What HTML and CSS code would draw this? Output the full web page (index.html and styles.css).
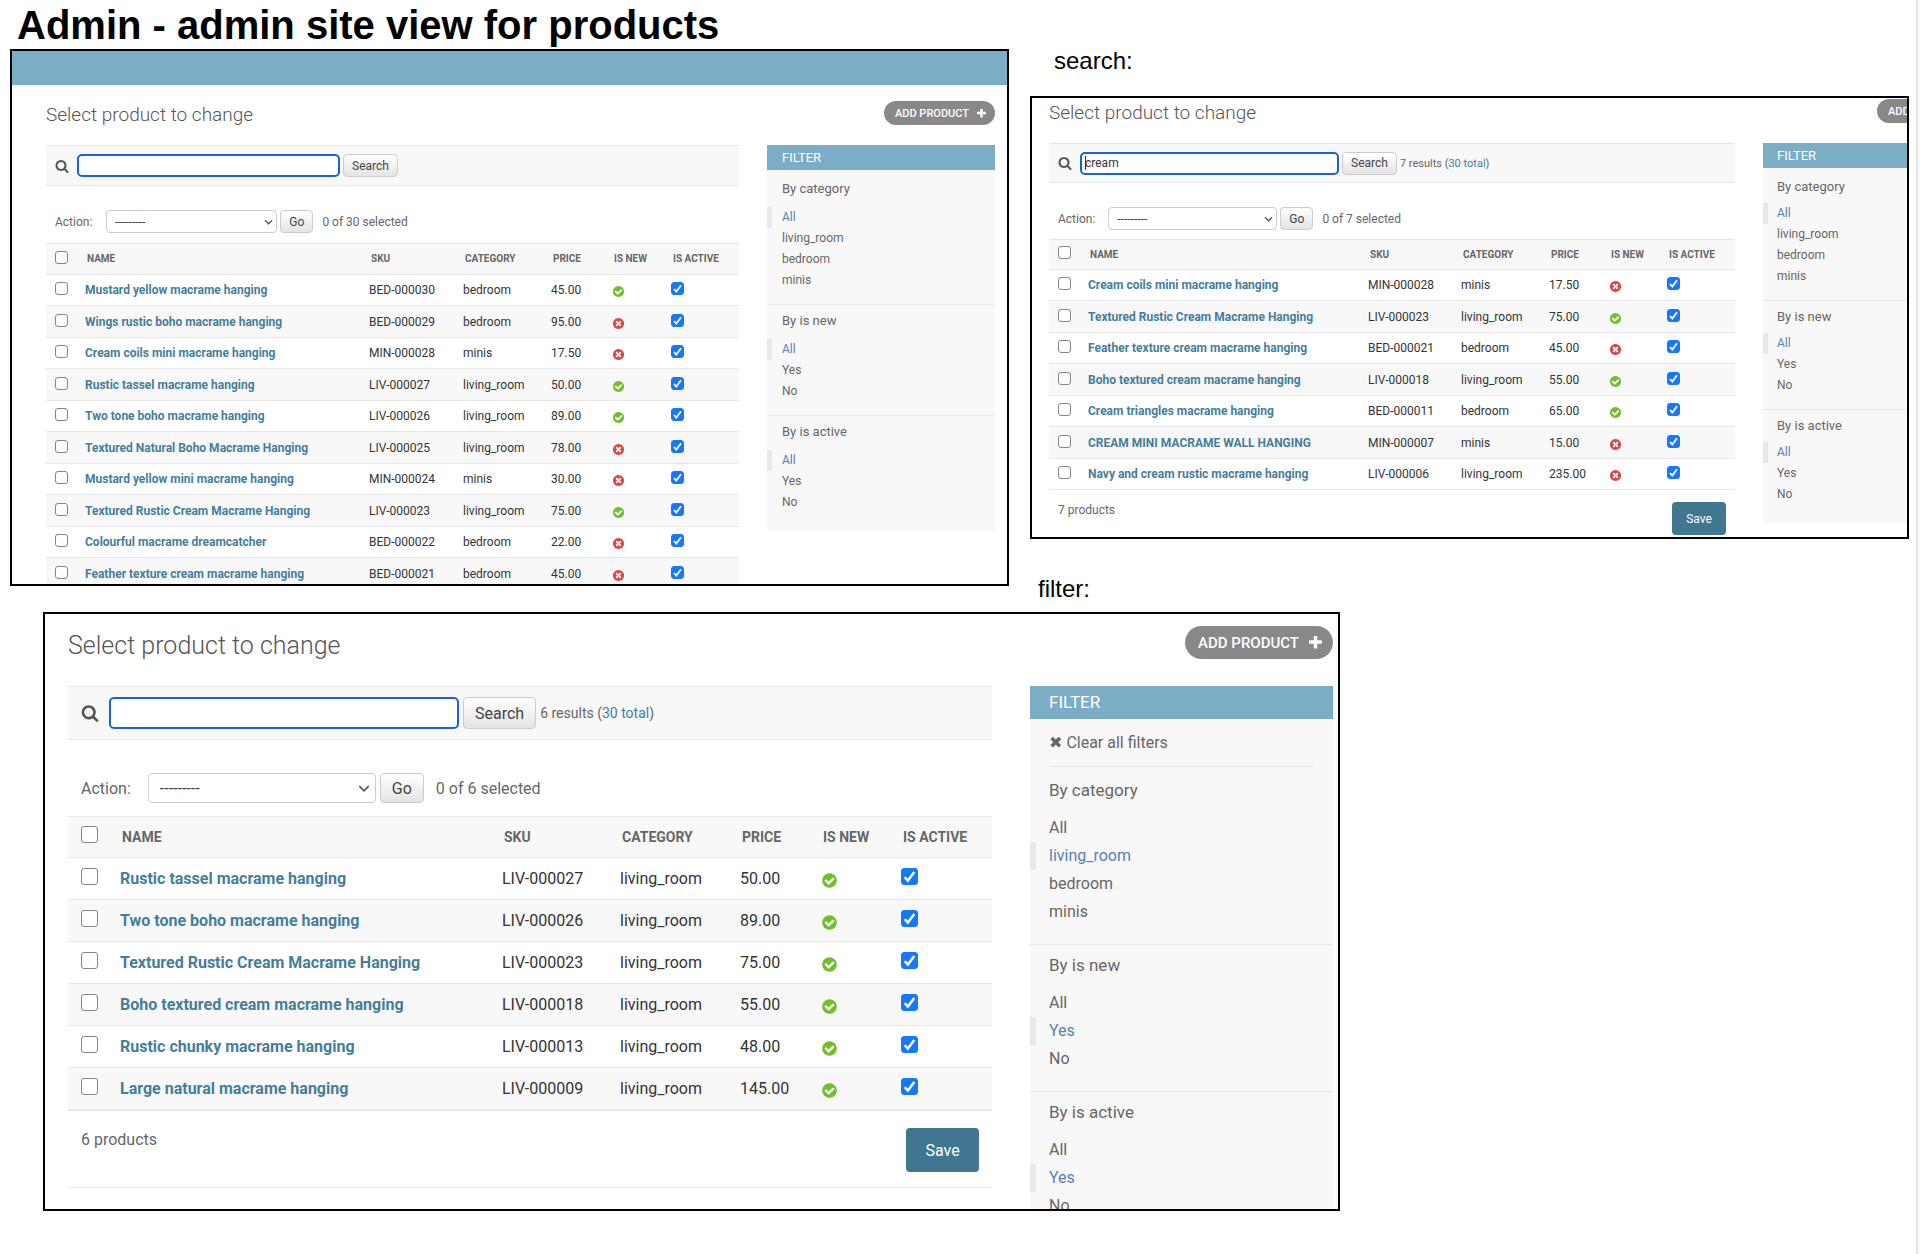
FILE: index.html
```html
<!DOCTYPE html>
<html lang="en">
<head>
<meta charset="utf-8">
<meta name="viewport" content="width=device-width, initial-scale=1">
<title>Admin - admin site view for products</title>
<link rel="stylesheet" href="styles.css">
</head>
<body>
<svg class="sprite" aria-hidden="true">
  <symbol id="yes" viewBox="0 0 1792 1792"><path fill="#70bf2b" d="M1412 734q0-28-18-46l-91-90q-19-19-45-19t-45 19l-408 407-226-226q-19-19-45-19t-45 19l-91 90q-18 18-18 46 0 27 18 45l362 362q19 19 45 19 27 0 46-19l543-543q18-18 18-45zm252 162q0 209-103 385.5t-279.5 279.5-385.5 103-385.5-103-279.5-279.5-103-385.5 103-385.5 279.5-279.5 385.5-103 385.5 103 279.5 279.5 103 385.5z"/></symbol>
  <symbol id="no" viewBox="0 0 1792 1792"><path fill="#dd4646" d="M1277 1122q0-26-19-45l-181-181 181-181q19-19 19-45 0-27-19-46l-90-90q-19-18-46-18-26 0-45 18l-181 181-181-181q-19-18-45-18-27 0-46 18l-90 90q-19 19-19 46 0 26 19 45l181 181-181 181q-19 19-19 45 0 27 19 46l90 90q19 18 46 18 26 0 45-18l181-181 181 181q19 18 45 18 27 0 46-18l90-90q19-19 19-46zm387-226q0 209-103 385.5t-279.5 279.5-385.5 103-385.5-103-279.5-279.5-103-385.5 103-385.5 279.5-279.5 385.5-103 385.5 103 279.5 279.5 103 385.5z"/></symbol>
  <symbol id="lens" viewBox="0 0 1792 1792"><path fill="#555" d="M1216 832q0-185-131.5-316.5t-316.5-131.5-316.5 131.5-131.5 316.5 131.5 316.5 316.5 131.5 316.5-131.5 131.5-316.5zm512 832q0 52-38 90t-90 38q-54 0-90-38l-343-342q-179 124-399 124-143 0-273.5-55.5t-225-150-150-225-55.5-273.5 55.5-273.5 150-225 225-150 273.5-55.5 273.5 55.5 225 150 150 225 55.5 273.5q0 220-124 399l343 343q37 37 37 90z"/></symbol>
  <symbol id="plus" viewBox="192 192 1408 1408"><path fill="#fff" d="M1600 736v192q0 40-28 68t-68 28h-416v416q0 40-28 68t-68 28h-192q-40 0-68-28t-28-68v-416h-416q-40 0-68-28t-28-68v-192q0-40 28-68t68-28h416v-416q0-40 28-68t68-28h192q40 0 68 28t28 68v416h416q40 0 68 28t28 68z"/></symbol>
</svg>

<main class="page">
  <h1 class="page-title">Admin - admin site view for products</h1>

  <div class="top">
    <section class="shot shot-all" aria-label="All products">
      <div class="band"></div>
      <div class="admin">
        <header class="head">
          <h2 class="title">Select product to change</h2>
          <a class="add" href="#">ADD PRODUCT <svg><use href="#plus"/></svg></a>
        </header>
        <div class="cols">
          <div class="listing">
            <form class="search">
              <label for="q1"><svg class="lens" role="img" aria-label="Search"><use href="#lens"/></svg></label>
              <input class="query" id="q1" type="text">
              <button class="btn" type="button">Search</button>
            </form>
            <div class="actions">
              <label for="a1">Action:</label>
              <select class="select" id="a1"><option>---------</option></select>
              <button class="btn" type="button">Go</button>
              <span class="counter">0 of 30 selected</span>
            </div>
            <table class="results">
              <colgroup><col class="c-check"><col class="c-name"><col class="c-sku"><col class="c-cat"><col class="c-price"><col class="c-new"><col class="c-active"></colgroup>
              <thead><tr><th><input type="checkbox" aria-label="Select all"></th><th>NAME</th><th>SKU</th><th>CATEGORY</th><th>PRICE</th><th>IS NEW</th><th>IS ACTIVE</th></tr></thead>
              <tbody>
                <tr><td><input type="checkbox" aria-label="Select"></td><th><a href="#">Mustard yellow macrame hanging</a></th><td>BED-000030</td><td>bedroom</td><td>45.00</td><td><svg class="flag"><use href="#yes"/></svg></td><td><input type="checkbox" checked aria-label="Is active"></td></tr>
                <tr><td><input type="checkbox" aria-label="Select"></td><th><a href="#">Wings rustic boho macrame hanging</a></th><td>BED-000029</td><td>bedroom</td><td>95.00</td><td><svg class="flag"><use href="#no"/></svg></td><td><input type="checkbox" checked aria-label="Is active"></td></tr>
                <tr><td><input type="checkbox" aria-label="Select"></td><th><a href="#">Cream coils mini macrame hanging</a></th><td>MIN-000028</td><td>minis</td><td>17.50</td><td><svg class="flag"><use href="#no"/></svg></td><td><input type="checkbox" checked aria-label="Is active"></td></tr>
                <tr><td><input type="checkbox" aria-label="Select"></td><th><a href="#">Rustic tassel macrame hanging</a></th><td>LIV-000027</td><td>living_room</td><td>50.00</td><td><svg class="flag"><use href="#yes"/></svg></td><td><input type="checkbox" checked aria-label="Is active"></td></tr>
                <tr><td><input type="checkbox" aria-label="Select"></td><th><a href="#">Two tone boho macrame hanging</a></th><td>LIV-000026</td><td>living_room</td><td>89.00</td><td><svg class="flag"><use href="#yes"/></svg></td><td><input type="checkbox" checked aria-label="Is active"></td></tr>
                <tr><td><input type="checkbox" aria-label="Select"></td><th><a href="#">Textured Natural Boho Macrame Hanging</a></th><td>LIV-000025</td><td>living_room</td><td>78.00</td><td><svg class="flag"><use href="#no"/></svg></td><td><input type="checkbox" checked aria-label="Is active"></td></tr>
                <tr><td><input type="checkbox" aria-label="Select"></td><th><a href="#">Mustard yellow mini macrame hanging</a></th><td>MIN-000024</td><td>minis</td><td>30.00</td><td><svg class="flag"><use href="#no"/></svg></td><td><input type="checkbox" checked aria-label="Is active"></td></tr>
                <tr><td><input type="checkbox" aria-label="Select"></td><th><a href="#">Textured Rustic Cream Macrame Hanging</a></th><td>LIV-000023</td><td>living_room</td><td>75.00</td><td><svg class="flag"><use href="#yes"/></svg></td><td><input type="checkbox" checked aria-label="Is active"></td></tr>
                <tr><td><input type="checkbox" aria-label="Select"></td><th><a href="#">Colourful macrame dreamcatcher</a></th><td>BED-000022</td><td>bedroom</td><td>22.00</td><td><svg class="flag"><use href="#no"/></svg></td><td><input type="checkbox" checked aria-label="Is active"></td></tr>
                <tr><td><input type="checkbox" aria-label="Select"></td><th><a href="#">Feather texture cream macrame hanging</a></th><td>BED-000021</td><td>bedroom</td><td>45.00</td><td><svg class="flag"><use href="#no"/></svg></td><td><input type="checkbox" checked aria-label="Is active"></td></tr>
              </tbody>
            </table>
          </div>
          <aside class="filter">
            <h3>FILTER</h3>
            <section class="group"><h4>By category</h4>
              <ul><li class="on"><a href="#">All</a></li><li><a href="#">living_room</a></li><li><a href="#">bedroom</a></li><li><a href="#">minis</a></li></ul></section>
            <section class="group"><h4>By is new</h4>
              <ul><li class="on"><a href="#">All</a></li><li><a href="#">Yes</a></li><li><a href="#">No</a></li></ul></section>
            <section class="group"><h4>By is active</h4>
              <ul><li class="on"><a href="#">All</a></li><li><a href="#">Yes</a></li><li><a href="#">No</a></li></ul></section>
          </aside>
        </div>
      </div>
    </section>

    <div class="right">
      <p class="caption caption-search">search:</p>
      <section class="shot shot-search" aria-label="Search results">
        <div class="admin">
          <header class="head">
            <h2 class="title">Select product to change</h2>
            <a class="add" href="#">ADD PRODUCT <svg><use href="#plus"/></svg></a>
          </header>
          <div class="cols">
            <div class="listing">
              <form class="search">
                <label for="q2"><svg class="lens" role="img" aria-label="Search"><use href="#lens"/></svg></label>
                <input class="query query-caret" id="q2" type="text" value="cream">
                <button class="btn" type="button">Search</button>
                <span class="found">7 results (<a href="#">30 total</a>)</span>
              </form>
              <div class="actions">
                <label for="a2">Action:</label>
                <select class="select" id="a2"><option>---------</option></select>
                <button class="btn" type="button">Go</button>
                <span class="counter">0 of 7 selected</span>
              </div>
              <table class="results">
                <colgroup><col class="c-check"><col class="c-name"><col class="c-sku"><col class="c-cat"><col class="c-price"><col class="c-new"><col class="c-active"></colgroup>
                <thead><tr><th><input type="checkbox" aria-label="Select all"></th><th>NAME</th><th>SKU</th><th>CATEGORY</th><th>PRICE</th><th>IS NEW</th><th>IS ACTIVE</th></tr></thead>
                <tbody>
                  <tr><td><input type="checkbox" aria-label="Select"></td><th><a href="#">Cream coils mini macrame hanging</a></th><td>MIN-000028</td><td>minis</td><td>17.50</td><td><svg class="flag"><use href="#no"/></svg></td><td><input type="checkbox" checked aria-label="Is active"></td></tr>
                  <tr><td><input type="checkbox" aria-label="Select"></td><th><a href="#">Textured Rustic Cream Macrame Hanging</a></th><td>LIV-000023</td><td>living_room</td><td>75.00</td><td><svg class="flag"><use href="#yes"/></svg></td><td><input type="checkbox" checked aria-label="Is active"></td></tr>
                  <tr><td><input type="checkbox" aria-label="Select"></td><th><a href="#">Feather texture cream macrame hanging</a></th><td>BED-000021</td><td>bedroom</td><td>45.00</td><td><svg class="flag"><use href="#no"/></svg></td><td><input type="checkbox" checked aria-label="Is active"></td></tr>
                  <tr><td><input type="checkbox" aria-label="Select"></td><th><a href="#">Boho textured cream macrame hanging</a></th><td>LIV-000018</td><td>living_room</td><td>55.00</td><td><svg class="flag"><use href="#yes"/></svg></td><td><input type="checkbox" checked aria-label="Is active"></td></tr>
                  <tr><td><input type="checkbox" aria-label="Select"></td><th><a href="#">Cream triangles macrame hanging</a></th><td>BED-000011</td><td>bedroom</td><td>65.00</td><td><svg class="flag"><use href="#yes"/></svg></td><td><input type="checkbox" checked aria-label="Is active"></td></tr>
                  <tr><td><input type="checkbox" aria-label="Select"></td><th><a href="#">CREAM MINI MACRAME WALL HANGING</a></th><td>MIN-000007</td><td>minis</td><td>15.00</td><td><svg class="flag"><use href="#no"/></svg></td><td><input type="checkbox" checked aria-label="Is active"></td></tr>
                  <tr><td><input type="checkbox" aria-label="Select"></td><th><a href="#">Navy and cream rustic macrame hanging</a></th><td>LIV-000006</td><td>living_room</td><td>235.00</td><td><svg class="flag"><use href="#no"/></svg></td><td><input type="checkbox" checked aria-label="Is active"></td></tr>
                </tbody>
              </table>
              <footer class="foot"><span class="total">7 products</span><button class="save" type="button">Save</button></footer>
            </div>
            <aside class="filter">
              <h3>FILTER</h3>
              <section class="group"><h4>By category</h4>
                <ul><li class="on"><a href="#">All</a></li><li><a href="#">living_room</a></li><li><a href="#">bedroom</a></li><li><a href="#">minis</a></li></ul></section>
              <section class="group"><h4>By is new</h4>
                <ul><li class="on"><a href="#">All</a></li><li><a href="#">Yes</a></li><li><a href="#">No</a></li></ul></section>
              <section class="group"><h4>By is active</h4>
                <ul><li class="on"><a href="#">All</a></li><li><a href="#">Yes</a></li><li><a href="#">No</a></li></ul></section>
            </aside>
          </div>
        </div>
      </section>
      <p class="caption caption-filter">filter:</p>
    </div>
  </div>

  <div class="bottom">
    <section class="shot shot-filter" aria-label="Filtered products">
      <div class="admin">
        <header class="head">
          <h2 class="title">Select product to change</h2>
          <a class="add" href="#">ADD PRODUCT <svg><use href="#plus"/></svg></a>
        </header>
        <div class="cols">
          <div class="listing">
            <form class="search">
              <label for="q3"><svg class="lens" role="img" aria-label="Search"><use href="#lens"/></svg></label>
              <input class="query" id="q3" type="text">
              <button class="btn" type="button">Search</button>
              <span class="found">6 results (<a href="#">30 total</a>)</span>
            </form>
            <div class="actions">
              <label for="a3">Action:</label>
              <select class="select" id="a3"><option>---------</option></select>
              <button class="btn" type="button">Go</button>
              <span class="counter">0 of 6 selected</span>
            </div>
            <table class="results">
              <colgroup><col class="c-check"><col class="c-name"><col class="c-sku"><col class="c-cat"><col class="c-price"><col class="c-new"><col class="c-active"></colgroup>
              <thead><tr><th><input type="checkbox" aria-label="Select all"></th><th>NAME</th><th>SKU</th><th>CATEGORY</th><th>PRICE</th><th>IS NEW</th><th>IS ACTIVE</th></tr></thead>
              <tbody>
                <tr><td><input type="checkbox" aria-label="Select"></td><th><a href="#">Rustic tassel macrame hanging</a></th><td>LIV-000027</td><td>living_room</td><td>50.00</td><td><svg class="flag"><use href="#yes"/></svg></td><td><input type="checkbox" checked aria-label="Is active"></td></tr>
                <tr><td><input type="checkbox" aria-label="Select"></td><th><a href="#">Two tone boho macrame hanging</a></th><td>LIV-000026</td><td>living_room</td><td>89.00</td><td><svg class="flag"><use href="#yes"/></svg></td><td><input type="checkbox" checked aria-label="Is active"></td></tr>
                <tr><td><input type="checkbox" aria-label="Select"></td><th><a href="#">Textured Rustic Cream Macrame Hanging</a></th><td>LIV-000023</td><td>living_room</td><td>75.00</td><td><svg class="flag"><use href="#yes"/></svg></td><td><input type="checkbox" checked aria-label="Is active"></td></tr>
                <tr><td><input type="checkbox" aria-label="Select"></td><th><a href="#">Boho textured cream macrame hanging</a></th><td>LIV-000018</td><td>living_room</td><td>55.00</td><td><svg class="flag"><use href="#yes"/></svg></td><td><input type="checkbox" checked aria-label="Is active"></td></tr>
                <tr><td><input type="checkbox" aria-label="Select"></td><th><a href="#">Rustic chunky macrame hanging</a></th><td>LIV-000013</td><td>living_room</td><td>48.00</td><td><svg class="flag"><use href="#yes"/></svg></td><td><input type="checkbox" checked aria-label="Is active"></td></tr>
                <tr><td><input type="checkbox" aria-label="Select"></td><th><a href="#">Large natural macrame hanging</a></th><td>LIV-000009</td><td>living_room</td><td>145.00</td><td><svg class="flag"><use href="#yes"/></svg></td><td><input type="checkbox" checked aria-label="Is active"></td></tr>
              </tbody>
            </table>
            <footer class="foot"><span class="total">6 products</span><button class="save" type="button">Save</button></footer>
          </div>
          <aside class="filter">
            <h3>FILTER</h3>
            <p class="clear"><a href="#"><span class="cross">&#10006;</span> Clear all filters</a></p>
            <section class="group"><h4>By category</h4>
              <ul><li><a href="#">All</a></li><li class="on"><a href="#">living_room</a></li><li><a href="#">bedroom</a></li><li><a href="#">minis</a></li></ul></section>
            <section class="group"><h4>By is new</h4>
              <ul><li><a href="#">All</a></li><li class="on"><a href="#">Yes</a></li><li><a href="#">No</a></li></ul></section>
            <section class="group"><h4>By is active</h4>
              <ul><li><a href="#">All</a></li><li class="on"><a href="#">Yes</a></li><li><a href="#">No</a></li></ul></section>
          </aside>
        </div>
      </div>
    </section>
  </div>
</main>
</body>
</html>
```
FILE: styles.css
```css
* { box-sizing: border-box; }

body {
  margin: 0;
  padding-right: 2px;
  background: #f8f8f8;
  font-family: Roboto, "Liberation Sans", sans-serif;
}

h1, h2, h3, h4, p, ul { margin: 0; padding: 0; }
ul { list-style: none; }
a { color: inherit; text-decoration: none; }
button, input, select { font: inherit; margin: 0; }
svg { display: block; }
.sprite { position: absolute; width: 0; height: 0; }

/* Page */
.page {
  min-height: 100vh;
  padding: 0 7px 43px 10px;
  border-right: 2px solid #e4e4e4;
  background: #fff;
}
.page-title {
  padding: 1px 0 0 7px;
  font: bold 40px/48px "Liberation Sans", Arial, sans-serif;
  color: #000;
}
.top {
  display: grid;
  grid-template-columns: 999fr 879fr;
  gap: 21px;
  align-items: start;
}
.bottom {
  display: grid;
  grid-template-columns: 1297fr 569fr;
  padding: 11px 0 0 33px;
}
.right { min-width: 0; }
.caption {
  font: 24px/24px "Liberation Sans", Arial, sans-serif;
  color: #000;
}
.caption-search { padding: 0 0 23px 24px; }
.caption-filter { padding: 38px 0 0 8px; }

/* Framed view: the frame crops what runs past it */
.shot {
  --text: 12px;
  --small: 11px;
  --label: 10px;
  --heading: 13px;
  --title: 19px;
  --title-line: 28px;
  --add: 11px;
  --add-h: 24px;
  --add-pad: 11px;
  --plus: 9px;
  --bar: 41px;
  --edge: 9px;
  --lens: 14px;
  --lens-gap: 8px;
  --query: 263px;
  --query-h: 23px;
  --gap: 3px;
  --control: 23px;
  --select: 171px;
  --select-gap: 14px;
  --act-top: 24px;
  --act-bottom: 10px;
  --cell: 8px;
  --head-cell: 10px;
  --box: 13px;
  --box-lift: 3px;
  --flag: 13px;
  --flag-drop: 3px;
  --head-row: 32px;
  --odd: 31px;
  --even: 32px;
  --side: 228px;
  --side-gap: 28px;
  --side-pad: 15px;
  --side-head: 25px;
  --group-head: 32px;
  --group-gap: 2px;
  --item: 21px;
  --group-end: 14px;
  --marker: 5px;
  min-width: 0;
  overflow: hidden;
  border: 2px solid #000;
  background: #fff;
  color: #666;
  font-size: var(--text);
}
.shot-all { height: 537px; }
.shot-search {
  --bar: 40px;
  --query: 259px;
  --select: 169px;
  --select-gap: 13px;
  --act-bottom: 9px;
  --head-row: 31px;
  --side: 225px;
  --side-pad: 14px;
  --group-head: 31px;
  --group-gap: 1px;
  height: 443px;
}
.shot-filter {
  --text: 16px;
  --small: 14px;
  --label: 14px;
  --heading: 17px;
  --title: 25px;
  --title-line: 40px;
  --add: 15px;
  --add-h: 33px;
  --add-pad: 13px;
  --plus: 13px;
  --bar: 54px;
  --edge: 13px;
  --lens: 18px;
  --lens-gap: 10px;
  --query: 350px;
  --query-h: 32px;
  --gap: 4px;
  --control: 30px;
  --select: 228px;
  --select-gap: 17px;
  --act-top: 33px;
  --act-bottom: 13px;
  --cell: 11px;
  --head-cell: 13px;
  --box: 17px;
  --box-lift: 4px;
  --flag: 17px;
  --head-row: 42px;
  --odd: 42px;
  --even: 42px;
  --side: 303px;
  --side-gap: 38px;
  --side-pad: 19px;
  --side-head: 33px;
  --group-head: 40px;
  --group-gap: 4px;
  --item: 28px;
  --group-end: 19px;
  --marker: 6px;
  height: 599px;
}

.band { height: 34px; background: #7badc7; }

.shot-all .admin { padding: 0 12px 0 34px; }
.shot-search .admin { margin-right: -81px; padding-left: 17px; }
.shot-filter .admin { padding: 0 5px 0 23px; }

/* Title row */
.head {
  display: flex;
  justify-content: space-between;
  align-items: flex-start;
  height: 60px;
  padding-top: 16px;
}
.shot-search .head { height: 45px; padding-top: 1px; }
.shot-filter .head { height: 72px; padding-top: 12px; }
.title {
  font-size: var(--title);
  line-height: var(--title-line);
  font-weight: 300;
  color: #555;
}
.add {
  display: flex;
  align-items: center;
  gap: 8px;
  height: var(--add-h);
  padding: 0 9px 0 var(--add-pad);
  border-radius: 17px;
  background: #888;
  color: #fff;
  font-size: var(--add);
  font-weight: 500;
}
.add svg { width: var(--plus); height: var(--plus); }
.shot-filter .add { gap: 10px; padding-right: 11px; }

.cols {
  display: grid;
  grid-template-columns: minmax(0, 1fr) var(--side);
  gap: var(--side-gap);
  align-items: start;
}

/* Search bar */
.search {
  display: flex;
  align-items: center;
  gap: var(--gap);
  height: var(--bar);
  padding-left: var(--edge);
  border: solid #e8e8e8;
  border-width: 1px 0;
  background: #f8f8f8;
}
.search label { margin-right: calc(var(--lens-gap) - var(--gap)); }
.lens { width: var(--lens); height: var(--lens); }
.query {
  width: var(--query);
  height: var(--query-h);
  padding: 0 5px;
  border: 2px solid #1763d0;
  border-radius: 5px;
  background: #fff;
  color: #333;
  outline: 0;
}
.query-caret {
  padding: 0 3px;
  background: linear-gradient(#333, #333) 3px center / 1px 14px no-repeat #fff;
}
.btn {
  height: var(--query-h);
  padding: 0 8px;
  border: 1px solid #ccc;
  border-radius: 4px;
  background: linear-gradient(#fff, #e4e4e4);
  color: #444;
}
.shot-filter .btn { padding: 0 11px; }
.found { font-size: var(--small); white-space: nowrap; }
.found a { color: #447e9b; }

/* Action row */
.actions {
  display: flex;
  align-items: center;
  gap: var(--gap);
  padding: var(--act-top) 0 var(--act-bottom) var(--edge);
}
.actions label { margin-right: calc(var(--select-gap) - var(--gap)); }
.actions .btn { height: var(--control); }
.select {
  appearance: none;
  width: var(--select);
  height: var(--control);
  padding: 0 8px;
  border: 1px solid #ccc;
  border-radius: 4px;
  background: url("data:image/svg+xml,%3Csvg xmlns='http://www.w3.org/2000/svg' viewBox='0 0 10 6'%3E%3Cpath d='M1 1l4 4 4-4' fill='none' stroke='%23555' stroke-width='1.4'/%3E%3C/svg%3E") right 3px center / 9px 6px no-repeat #fff;
  color: #444;
}
.shot-filter .select { padding: 0 11px; background-position: right 5px center; background-size: 12px 7px; }
.counter { margin-left: 6px; }
.shot-filter .counter { margin-left: 8px; }

/* Results */
.results {
  width: 100%;
  table-layout: fixed;
  border-collapse: separate;
  border-spacing: 0;
}
.c-check { width: 31px; }
.c-name { width: 284px; }
.c-sku { width: 94px; }
.c-cat { width: 88px; }
.c-price { width: 61px; }
.c-new { width: 59px; }
.c-active { width: 76px; }
.shot-search .c-name { width: 280px; }
.shot-search .c-sku { width: 93px; }
.shot-search .c-price { width: 60px; }
.shot-search .c-new { width: 58px; }
.shot-filter .c-check { width: 41px; }
.shot-filter .c-name { width: 382px; }
.shot-filter .c-sku { width: 118px; }
.shot-filter .c-cat { width: 120px; }
.shot-filter .c-price { width: 81px; }
.shot-filter .c-new { width: 80px; }
.shot-filter .c-active { width: 102px; }
.results th, .results td {
  height: var(--odd);
  padding: 0 0 0 var(--cell);
  border-bottom: 1px solid #e8e8e8;
  text-align: left;
  vertical-align: middle;
  white-space: nowrap;
  color: #333;
}
.results thead th {
  height: var(--head-row);
  padding: 0 0 1px var(--head-cell);
  border-top: 1px solid #e8e8e8;
  background: #f8f8f8;
  color: #666;
  font-size: var(--label);
  font-weight: 700;
}
.results tr > :first-child { padding-left: var(--edge); }
.results tbody tr:nth-child(even) > * { height: var(--even); background: #f8f8f8; }
.results tbody th { color: #447e9b; font-weight: 700; }
.flag { width: var(--flag); height: var(--flag); margin-top: var(--flag-drop); }
.results input {
  appearance: none;
  display: block;
  width: var(--box);
  height: var(--box);
  margin-bottom: var(--box-lift);
  border: 1px solid #858585;
  border-radius: 3px;
  background: #fff;
}
.results input:checked {
  border-color: #1677ff;
  background: url("data:image/svg+xml,%3Csvg xmlns='http://www.w3.org/2000/svg' viewBox='0 0 11 11'%3E%3Cpath d='M2 6l2.3 2.5L9 2.2' fill='none' stroke='%23fff' stroke-width='1.8'/%3E%3C/svg%3E") center / 100% no-repeat #1677ff;
}

/* Count and save */
.foot {
  display: flex;
  justify-content: space-between;
  align-items: flex-start;
  padding: 12px 9px 0;
}
.total { line-height: 16px; }
.save {
  width: 54px;
  height: 33px;
  padding: 0;
  border: 0;
  border-radius: 4px;
  background: #417690;
  color: #fff;
}
.shot-filter .foot {
  height: 78px;
  padding: 17px 13px 0;
  border: solid #e8e8e8;
  border-width: 1px 0;
}
.shot-filter .total { line-height: 24px; }
.shot-filter .save { width: 73px; height: 44px; }

/* Filter column */
.filter { background: #f8f8f8; padding-bottom: 5px; }
.filter h3 {
  height: var(--side-head);
  padding-left: var(--side-pad);
  background: #7badc7;
  color: #fff;
  font-size: var(--heading);
  line-height: var(--side-head);
  font-weight: 400;
}
.clear {
  height: 48px;
  margin: 0 var(--side-pad);
  border-bottom: 1px solid #e8e8e8;
  line-height: 48px;
}
.cross { font-family: "DejaVu Sans", sans-serif; }
.group { padding-bottom: calc(var(--group-end) - 1px); border-bottom: 1px solid #e8e8e8; }
.group:first-of-type { padding-top: 3px; }
.group:last-child { border-bottom: 0; }
.group h4 {
  padding: 0 0 var(--group-gap) var(--side-pad);
  font-size: var(--heading);
  line-height: var(--group-head);
  font-weight: 400;
}
.group li {
  padding-left: calc(var(--side-pad) - var(--marker));
  border-left: var(--marker) solid transparent;
  line-height: var(--item);
}
.group .on { border-left-color: #e8e8e8; color: #5b80b2; }
```
